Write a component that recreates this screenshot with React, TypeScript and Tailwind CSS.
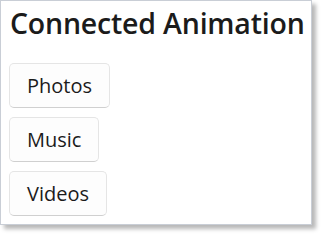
import React from "react";

export default function App() {
  const items = ["Photos", "Music", "Videos"];
  return (
    <div className="w-[321px] h-[234px] bg-white overflow-hidden" style={{ fontFamily: '"Open Sans", "Noto Sans", sans-serif' }}>
      <div className="w-[312px] h-[225px] bg-white border border-[#c9ced6] shadow-[4px_4px_4px_rgba(0,0,0,0.28)] pl-[8px] pt-[3px]">
        <h1 className="text-[28.5px] leading-[38px] font-semibold text-[#1b1b1b] pl-[1px] tracking-[-0.2px]">Connected Animation</h1>
        <div className="flex flex-col items-start gap-[9px] mt-[21px]">
          {items.map((t) => (
            <button
              key={t}
              className="h-[45px] px-[17px] rounded-[5px] bg-[#fdfdfd] border border-[#e5e5e5] border-b-[#d0d0d0] text-[20px] text-[#1b1b1b] leading-none"
            >
              {t}
            </button>
          ))}
        </div>
      </div>
    </div>
  );
}
